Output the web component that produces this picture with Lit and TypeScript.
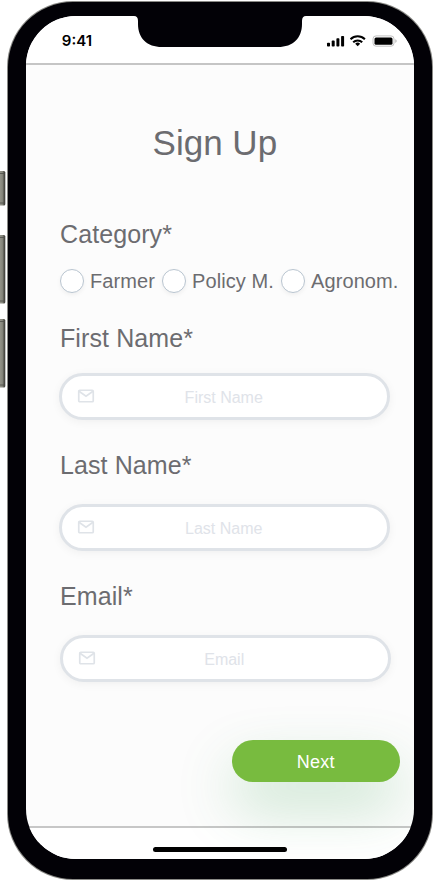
import { LitElement, html, css, svg } from "lit";
import { customElement, property } from "lit/decorators.js";

@customElement("status-bar")
class StatusBar extends LitElement {
  static styles = css`
    :host { display: flex; box-sizing: border-box; height: 47px; padding: 14px 16.8px 0 36.2px;
      justify-content: space-between; background: #fff; }
    .time { font: 600 15px/22px Inter, sans-serif; letter-spacing: 0; color: #000; }
    .icons { display: block; width: 72px; height: 20px; }
  `;
  render() {
    return html`
      <span class="time">9:41</span>
      <svg class="icons" viewBox="0 0 72 20">
        <rect x="2" y="12.8" width="3" height="3.7" rx=".8" />
        <rect x="6.7" y="10.6" width="3" height="5.9" rx=".8" />
        <rect x="11.4" y="8.2" width="3" height="8.3" rx=".8" />
        <rect x="16.1" y="6" width="3" height="10.5" rx=".8" />
        <g fill="none" stroke="#000" stroke-width="2">
          <path d="M25.5 9.3a10.2 10.2 0 0 1 14.4 0" />
          <path d="M28.2 12.3a6.3 6.3 0 0 1 9 0" />
        </g>
        <path d="M32.7 16.2l-2.5-2.5a3.6 3.6 0 0 1 5 0z" />
        <rect x="48" y="5.9" width="21" height="10.3" rx="3" fill="none" stroke="#c2c2c2" />
        <rect x="49.5" y="7.4" width="18" height="7.3" rx="1.5" />
        <path d="M70.3 9.3c1.8.6 1.8 3 0 3.6z" fill="#b8b8b8" />
      </svg>`;
  }
}

@customElement("text-field")
class TextField extends LitElement {
  @property() label = "";
  static styles = css`
    :host { display: block; }
    .label { font-size: 25px; line-height: 30px; color: #6c6c70; letter-spacing: 0.1px; }
    .box { display: flex; align-items: center; box-sizing: border-box; width: 331px; height: 47px;
      border: 3px solid #dfe3e8; border-radius: 24px; background: #fff; margin-left: -1px;
      box-shadow: 0 2px 10px rgba(0, 0, 0, 0.05); padding: 0 34.5px 0 15px; }
    .icon { display: block; width: 18px; height: 16px; flex: none; margin-bottom: 2px; }
    .hint { flex: 1; text-align: center; font-size: 16px; line-height: 24px; color: #e0e3e9;
      margin-top: 3px; }
  `;
  render() {
    return html`
      <div class="label">${this.label}*</div>
      <slot></slot>
      <div class="box">
        <svg class="icon" viewBox="0 0 18 16" fill="none" stroke="#dfe3e8" stroke-width="1.7">
          <rect x="1.75" y="2.25" width="14.5" height="11.5" rx="1" />
          <path d="M2 3.3l7 5 7-5" />
        </svg>
        <span class="hint">${this.label}</span>
      </div>`;
  }
}

@customElement("app-root")
class AppRoot extends LitElement {
  static styles = css`
    :host { display: block; position: relative; box-sizing: border-box; width: 433px; height: 880px;
      padding: 1px 0.5px 0.5px 7.3px; background: #fff; overflow: hidden;
      font-family: "Liberation Sans", Arial, sans-serif; }
    .rim { box-sizing: border-box; height: 100%; padding: 1px; border-radius: 66px; background: #8a8a86; }
    .case { box-sizing: border-box; height: 100%; padding: 14px 17.3px 19px; border-radius: 65px;
      background: #020106; }
    .screen { display: flex; flex-direction: column; box-sizing: border-box; height: 843px;
      border-radius: 50px; overflow: hidden; background: #fcfcfc; }
    .keys, .notch { position: absolute; left: 0; top: 0; }
    .line { flex: none; height: 2px; background: #c5c5c5; }
    .form { position: relative; z-index: 1; flex: 1; min-height: 0; padding: 58px 14.5px 0 34.4px; }
    h1 { margin: 0 0 56px; padding-right: 30px; text-align: center; font-size: 35px; font-weight: 400;
      line-height: 40px; color: #6c6c70; }
    .label { font-size: 25px; line-height: 30px; color: #6c6c70; letter-spacing: 0.1px; }
    .radios { display: flex; height: 24px; margin: 20px 0 30px; white-space: nowrap; }
    .radio { display: flex; gap: 6px; font-size: 20px; line-height: 24px; color: #6c6c70; letter-spacing: 0.1px; }
    .radio:nth-child(1) { width: 102px; }
    .radio:nth-child(2) { width: 119px; }
    .dot { box-sizing: border-box; flex: none; width: 24px; height: 24px; border: 1px solid #b9c5d0;
      border-radius: 50%; background: #fff; box-shadow: 0 2px 4px rgba(0, 0, 0, 0.05); }
    text-field { height: 127px; }
    .gap { height: 20px; }
    .gap.wide { height: 24px; }
    .tall { height: 131px; }
    .last { margin-left: 1px; text-indent: -1px; height: 159px; }
    .next { display: block; width: 168px; height: 42px; margin: 0 0 0 auto; padding: 3px 0 0; border: 0;
      border-radius: 21px; background: #78bb3f; color: #fff; font: 18px "Liberation Sans", Arial, sans-serif;
      letter-spacing: 0.2px; box-shadow: 0 25px 56px rgba(65, 165, 85, 0.28); }
    .foot { display: flex; flex: none; height: 31px; justify-content: center; align-items: flex-start;
      background: #fff; }
    .home { position: relative; z-index: 2; width: 134px; height: 5px; margin-top: 19px;
      border-radius: 3px; background: #000; }
    .line.low { position: relative; z-index: 2; background: rgba(60, 60, 60, 0.28); }
  `;

  private key(y: number, h: number) {
    return svg`
      <rect x="-4" y=${y} width="9.3" height=${h} rx="1.5" fill="url(#metal)" />
      <path d="M0 ${y + 2.5}h5M0 ${y + h - 2.5}h5" stroke="#4d4d47" stroke-width=".8" />`;
  }

  render() {
    return html`
      <svg class="keys" width="8" height="400">
        <defs>
          <linearGradient id="metal" gradientUnits="userSpaceOnUse" x1="0" y1="0" x2="5.3" y2="0">
            <stop offset="0" stop-color="#929287" />
            <stop offset=".45" stop-color="#85857b" />
            <stop offset=".75" stop-color="#55554e" />
            <stop offset="1" stop-color="#353531" />
          </linearGradient>
        </defs>
        ${this.key(171, 34.5)}${this.key(235, 68.5)}${this.key(319, 68.5)}
      </svg>
      <div class="rim"><div class="case"><div class="screen">
        <status-bar></status-bar>
        <div class="line"></div>
        <div class="form">
          <h1>Sign Up</h1>
          <div class="label">Category*</div>
          <div class="radios">
            ${["Farmer", "Policy M.", "Agronom."].map(
              (t) => html`<div class="radio"><span class="dot"></span><span>${t}</span></div>`
            )}
          </div>
          <text-field label="First Name"><div class="gap"></div></text-field>
          <text-field class="tall" label="Last Name"><div class="gap wide"></div></text-field>
          <text-field class="last" label="Email"><div class="gap wide"></div></text-field>
          <button class="next">Next</button>
        </div>
        <div class="line low"></div>
        <div class="foot"><div class="home"></div></div>
      </div></div></div>
      <svg class="notch" width="433" height="50">
        <path fill="#020106" d="M132 14v2h2q4 0 4 5v3c0 14 9 23 24 23h116c15 0 24-9 24-23v-3q0-5 4-5h2V14z" />
      </svg>`;
  }
}
